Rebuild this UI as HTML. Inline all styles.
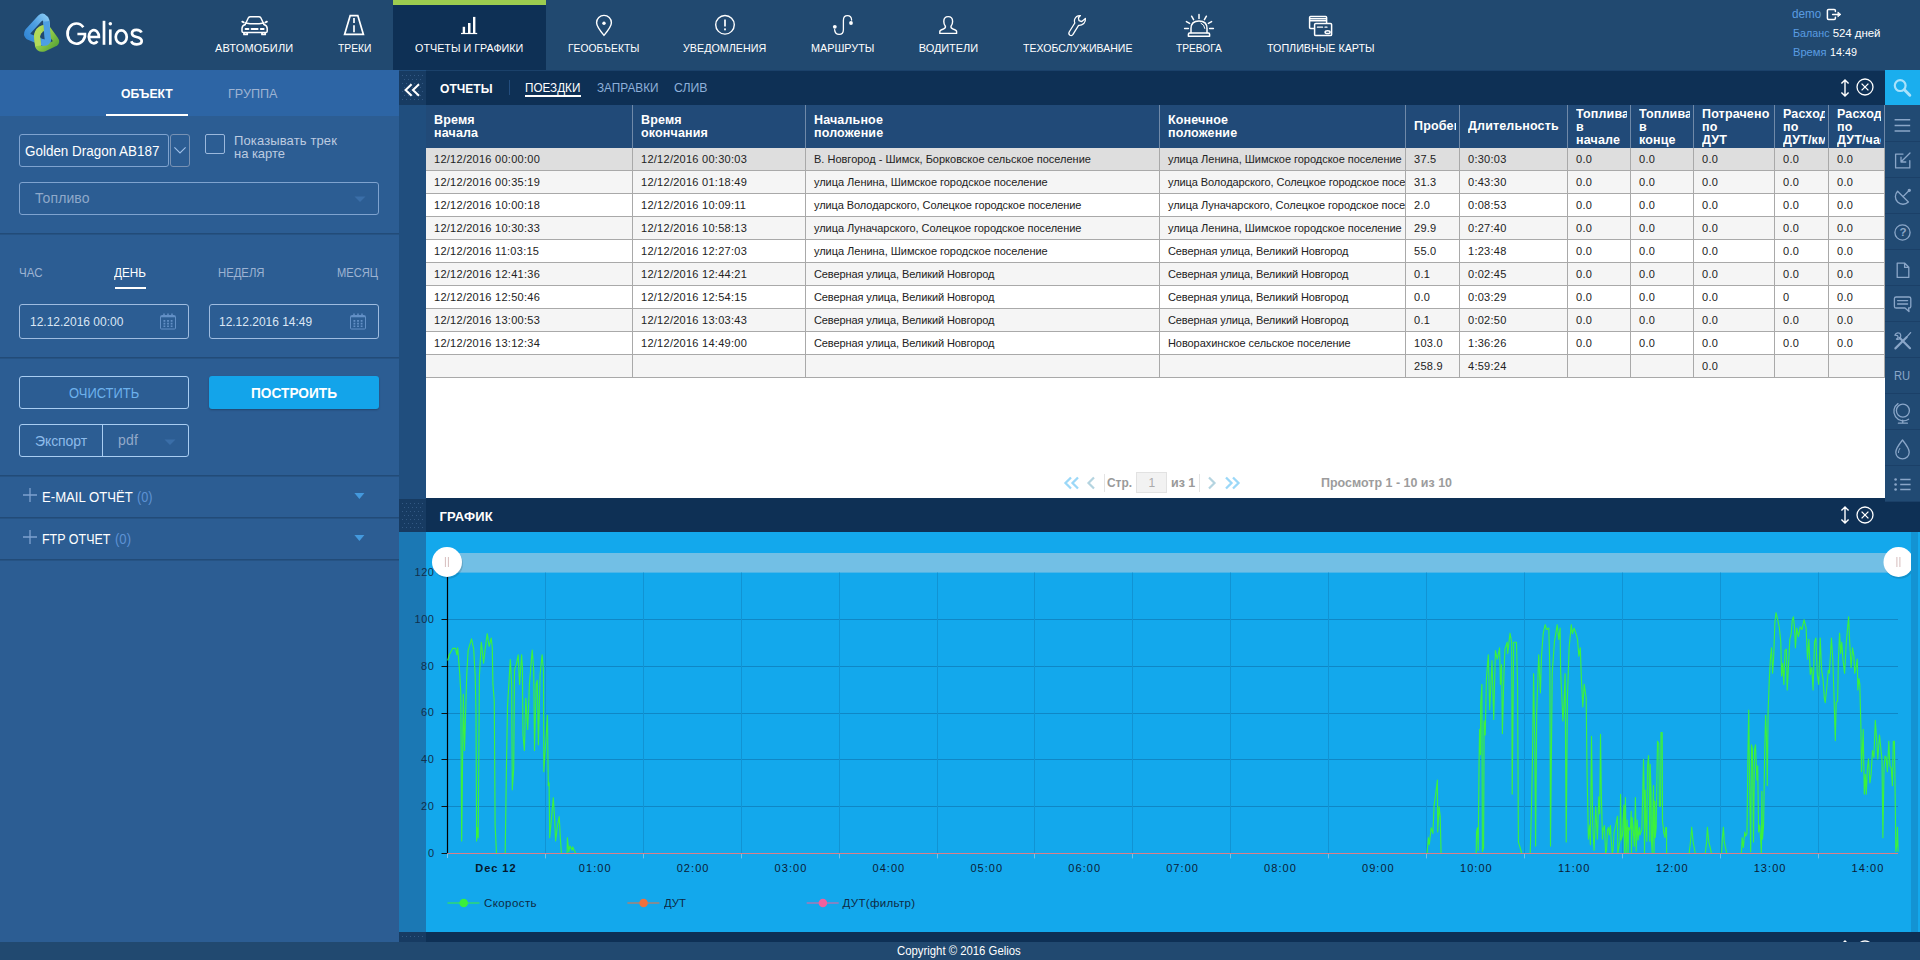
<!DOCTYPE html>
<html lang="ru"><head><meta charset="utf-8"><title>Gelios</title>
<style>
*{box-sizing:border-box;margin:0;padding:0}
html,body{width:1920px;height:960px;overflow:hidden;background:#2c5d93;font-family:"Liberation Sans",sans-serif;}
body{position:relative}
.a{position:absolute}
.t{position:absolute;white-space:nowrap;display:block}
svg{position:absolute;overflow:visible}
#hdr{position:absolute;left:0;top:0;width:1920px;height:70px;background:#214970}
#act{position:absolute;left:393px;top:0;width:153px;height:70px;background:#0e3055;border-top:5px solid #9ccc50}
#side{position:absolute;left:0;top:70px;width:399px;height:872px;background:#2c5d93}
#stabs{position:absolute;left:0;top:0;width:399px;height:46px;background:#2d65a5}
.hr{position:absolute;left:0;width:399px;height:1px;background:#224b78;box-shadow:0 1px 0 rgba(32,72,116,.45)}
.dots{background-color:#173b62;background-image:radial-gradient(circle at 1.5px 1.5px,rgba(110,150,200,.33) .5px,transparent .75px),radial-gradient(circle at 3.5px 5.5px,rgba(110,150,200,.33) .5px,transparent .75px);background-size:4px 8px;background-position:2px 3px;box-shadow:inset 0 0 0 3px #173b62}
.box{position:absolute;border:1px solid #7fa3cf;border-radius:3px}
#gut{position:absolute;left:399px;top:70px;width:27px;height:872px;background:#204e7e}
#rbar{position:absolute;left:426px;top:70px;width:1459px;height:35px;background:#0e3055}
#tbl{position:absolute;left:426px;top:105px;width:1459px;height:393px;background:#fff;overflow:hidden}
table{border-collapse:separate;border-spacing:0;table-layout:fixed;width:1459px}
th{background:#214a78;color:#fff;font-weight:bold;font-size:12.5px;line-height:13px;text-align:left;vertical-align:middle;height:43px;padding:0 3px 0 8px;text-overflow:clip;border-right:1px solid #6f89a8;overflow:hidden;white-space:nowrap}
td{height:23px;font-size:11px;color:#222;padding:0 0 0 8px;border-right:1px solid #a9a9a9;border-bottom:1px solid #a9a9a9;overflow:hidden;white-space:nowrap}
th div{overflow:hidden;white-space:nowrap;letter-spacing:.15px}
th div.h3{position:relative;top:1px}
tr.o td{background:#f5f5f5}
tr.s td{background:#dedede}
td.n{letter-spacing:.27px}
#gbar{position:absolute;left:426px;top:498px;width:1494px;height:34px;background:#0e3055}
#graph{position:absolute;left:426px;top:532px;width:1485px;height:400px;background:#13a8ec}
#tools{position:absolute;left:1885px;top:70px;width:35px;height:431px;background:#214a73}
#foot{position:absolute;left:0;top:942px;width:1920px;height:18px;background:#214970}
</style></head>
<body>
<div id="hdr">
<div id="act"></div>
<svg style="left:20px;top:10px" width="44" height="46" viewBox="20 10 44 46">
<defs>
<linearGradient id="gb" x1="0" y1="1" x2="1" y2="0"><stop offset="0" stop-color="#2e84d4"/><stop offset=".55" stop-color="#4f9fe2"/><stop offset="1" stop-color="#86c9f4"/></linearGradient>
<linearGradient id="gg" x1="0" y1="0" x2="1" y2="1"><stop offset="0" stop-color="#b4db58"/><stop offset=".45" stop-color="#93cb48"/><stop offset="1" stop-color="#55a336"/></linearGradient>
</defs>
<path d="M43.6 17.4 Q42.6 16 40.6 17.6 L28 31.4 Q26.2 34.4 28.6 36.6 L44 43 Q47.6 43.4 48 39.4 L46.4 21 Q45.6 18.4 43.6 17.4 Z" fill="none" stroke="url(#gb)" stroke-width="6.3" stroke-linejoin="round"/>
<path d="M43.4 28 Q38 29.6 37 36 L38 46 Q39.4 49.6 44 48.6 L55 43.4 Q57 41.6 55.4 39.4 L48 29.4 Q46 27.2 43.4 28 Z" fill="none" stroke="url(#gg)" stroke-width="6" stroke-linejoin="round"/>
<path d="M46.2 21.4 L47.9 39 Q47.6 42.8 44.4 42.8 L41.4 42" fill="none" stroke="#4d9fe3" stroke-width="6.1" stroke-linecap="butt" stroke-linejoin="round"/>
<path d="M38.2 45.8 L37 36 Q37.6 31.6 41 29.4" fill="none" stroke="#b2da5a" stroke-width="6" stroke-linecap="butt" stroke-linejoin="round"/>
</svg>
<svg style="left:62px;top:16px" width="86" height="34" viewBox="62 16 86 34"><g fill="none" stroke="#fff" stroke-width="2.7" stroke-linecap="butt" stroke-linejoin="miter">
<path d="M83.3 27.2 A8.9 10.1 0 1 0 84.9 36.6 L84.9 34 L77.4 34"/>
<path d="M88.6 37 L98.9 37 A5.05 6.6 0 1 0 97.5 41.3"/>
<path d="M104 20.8 V44.8"/>
<path d="M110.3 29.4 V44.8"/><circle cx="110.3" cy="23.7" r="1.75" fill="#fff" stroke="none"/>
<ellipse cx="121.25" cy="37" rx="5.5" ry="6.6"/>
<path d="M141.5 32.6 Q140.4 29.8 136.5 29.8 Q132 29.8 132 33.3 Q132 36 136.6 37 Q141.7 38.1 141.7 41.1 Q141.7 44.4 136.8 44.4 Q132.4 44.4 131.3 41.3"/>
</g></svg>
<span class="t" style="left:215.0px;top:41px;line-height:14px;font-size:11px;color:#fff;letter-spacing:0.17px;">АВТОМОБИЛИ</span>
<span class="t" style="left:337.5px;top:41px;line-height:14px;font-size:11px;color:#fff;transform:scaleX(0.9379);transform-origin:0 50%;">ТРЕКИ</span>
<span class="t" style="left:415.0px;top:41px;line-height:14px;font-size:11px;color:#fff;transform:scaleX(0.9804);transform-origin:0 50%;">ОТЧЕТЫ И ГРАФИКИ</span>
<span class="t" style="left:568.0px;top:41px;line-height:14px;font-size:11px;color:#fff;transform:scaleX(0.9358);transform-origin:0 50%;">ГЕООБЪЕКТЫ</span>
<span class="t" style="left:683.3px;top:41px;line-height:14px;font-size:11px;color:#fff;transform:scaleX(0.9767);transform-origin:0 50%;">УВЕДОМЛЕНИЯ</span>
<span class="t" style="left:811.0px;top:41px;line-height:14px;font-size:11px;color:#fff;transform:scaleX(0.9834);transform-origin:0 50%;">МАРШРУТЫ</span>
<span class="t" style="left:918.8px;top:41px;line-height:14px;font-size:11px;color:#fff;letter-spacing:-0.08px;">ВОДИТЕЛИ</span>
<span class="t" style="left:1022.5px;top:41px;line-height:14px;font-size:11px;color:#fff;transform:scaleX(0.9600);transform-origin:0 50%;">ТЕХОБСЛУЖИВАНИЕ</span>
<span class="t" style="left:1176.2px;top:41px;line-height:14px;font-size:11px;color:#fff;transform:scaleX(0.9250);transform-origin:0 50%;">ТРЕВОГА</span>
<span class="t" style="left:1266.5px;top:41px;line-height:14px;font-size:11px;color:#fff;transform:scaleX(0.9748);transform-origin:0 50%;">ТОПЛИВНЫЕ КАРТЫ</span>
<svg style="left:240px;top:15px" width="30" height="22" viewBox="240 15 30 22"><g fill="none" stroke="#fff" stroke-width="1.5" stroke-linecap="round" stroke-linejoin="round">
<path d="M245.2 24.5 L248.4 17.8 Q249 16.7 250.4 16.7 L258.8 16.7 Q260.2 16.7 260.8 17.8 L264 24.5"/>
<path d="M245.2 24.5 Q242 25.6 242 28.6 L242 31.2 Q242 32.6 243.6 32.6 L265.6 32.6 Q267.2 32.6 267.2 31.2 L267.2 28.6 Q267.2 25.6 264 24.5"/>
<path d="M245.4 22.9 Q254.6 24.6 263.8 22.9"/>
<path d="M242.3 21.7 L243.7 22.3 M266.9 21.7 L265.5 22.3" stroke-width="1.8"/>
<path d="M244 33 L244 34.4 L247.2 34.4 L247.2 33 M262 33 L262 34.4 L265.2 34.4 L265.2 33" stroke-width="1.8"/>
<path d="M245.6 28.9 L248.4 28.9 M251.6 28.9 L257.6 28.9 M260.8 28.9 L263.6 28.9" stroke-width="2"/>
</g></svg>
<svg style="left:342px;top:13px" width="24" height="24" viewBox="342 13 24 24"><g fill="none" stroke="#fff" stroke-width="1.5" stroke-linecap="round" stroke-linejoin="round">
<path d="M350.2 15.6 L357.8 15.6 L363.4 34.4 L344.6 34.4 Z" stroke-width="1.7" stroke-linejoin="miter"/>
<path d="M354 18 L354 23 M354 25.2 L354 32.2" stroke-width="1.7" stroke-linecap="butt"/>
</g></svg>
<svg style="left:460px;top:15px" width="20" height="21" viewBox="460 15 20 21"><g fill="#fff">
<rect x="461" y="32.9" width="16.2" height="1.2"/>
<rect x="462.7" y="26.8" width="2.4" height="6.5"/><rect x="468" y="23" width="2.5" height="10.3"/><rect x="473" y="16.9" width="2.4" height="16.4"/>
</g></svg>
<svg style="left:594px;top:13px" width="20" height="25" viewBox="594 13 20 25"><g fill="none" stroke="#fff" stroke-width="1.5" stroke-linecap="round" stroke-linejoin="round">
<path d="M604 35.4 Q596.6 26.6 596.6 22.8 A7.4 7.4 0 0 1 611.4 22.8 Q611.4 26.6 604 35.4 Z" stroke-width="1.4"/>
<circle cx="604" cy="23.2" r="1.7" fill="#fff" stroke="none"/>
</g></svg>
<svg style="left:713px;top:13px" width="24" height="24" viewBox="713 13 24 24"><g fill="none" stroke="#fff" stroke-width="1.5" stroke-linecap="round" stroke-linejoin="round">
<circle cx="725" cy="24.8" r="9.3" stroke-width="1.4"/>
<path d="M725 19.6 L725 26.4" stroke-width="1.7" stroke-linecap="butt"/><rect x="724.1" y="28.4" width="1.8" height="1.9" fill="#fff" stroke="none"/>
</g></svg>
<svg style="left:831px;top:13px" width="24" height="24" viewBox="831 13 24 24"><g fill="none" stroke="#fff" stroke-width="1.5" stroke-linecap="round" stroke-linejoin="round">
<path d="M834.6 29.6 Q835 34.4 839.2 34.4 Q843.4 34.4 843.4 29.4 L843.4 20.4 Q843.4 15.6 847.4 15.6 Q851.4 15.6 851.6 20" stroke-width="1.3"/>
<circle cx="834.8" cy="26.8" r="1.9" fill="#fff" stroke="none"/><circle cx="851" cy="23" r="1.9" fill="#fff" stroke="none"/>
</g></svg>
<svg style="left:937px;top:14px" width="23" height="22" viewBox="937 14 23 22"><g fill="none" stroke="#fff" stroke-width="1.5" stroke-linecap="round" stroke-linejoin="round">
<path d="M948.2 16.6 Q952.6 16.6 952.6 21.4 Q952.6 24.4 951 26.2 Q950.6 28.2 953 29 Q956.6 30 956.6 31.6 L956.6 33.4 L939.8 33.4 L939.8 31.6 Q939.8 30 943.4 29 Q945.8 28.2 945.4 26.2 Q943.8 24.4 943.8 21.4 Q943.8 16.6 948.2 16.6 Z" stroke-width="1.4"/>
</g></svg>
<svg style="left:1066px;top:13px" width="23" height="25" viewBox="1066 13 23 25"><g fill="none" stroke="#fff" stroke-width="1.5" stroke-linecap="round" stroke-linejoin="round">
<path d="M1080.4 15.6 Q1076 15.4 1074.6 19.4 Q1074 21.4 1074.8 23 L1069.2 32 Q1068.2 34 1070 35.2 Q1071.8 36.2 1073 34.4 L1078.6 25.4 Q1081.6 25.6 1083.8 23.6 Q1085.8 21.6 1085.4 18.4 L1081.8 21.6 L1079 20.6 L1078.4 17.8 Z" stroke-width="1.3"/>
</g></svg>
<svg style="left:1182px;top:12px" width="34" height="27" viewBox="1182 12 34 27"><g fill="none" stroke="#fff" stroke-width="1.5" stroke-linecap="round" stroke-linejoin="round" stroke-width="1.3">
<path d="M1191 32.8 L1191 28.6 Q1191 21 1199 21 Q1207 21 1207 28.6 L1207 32.8"/>
<path d="M1189.6 33 L1208.4 33 Q1209.6 33 1209.6 34.2 L1209.6 36.2 L1188.4 36.2 L1188.4 34.2 Q1188.4 33 1189.6 33 Z"/>
<path d="M1201 23.2 Q1204.4 24.4 1204.8 28.4" stroke-width="1"/>
<path d="M1199 14.4 L1199 18.4 M1191.6 16.2 L1193.6 19.6 M1206.4 16.2 L1204.4 19.6 M1186.4 21.6 L1189.6 23.4 M1211.6 21.6 L1208.4 23.4 M1184.6 28.6 L1188.4 28.6 M1213.4 28.6 L1209.6 28.6"/>
</g></svg>
<svg style="left:1307px;top:14px" width="27" height="24" viewBox="1307 14 27 24"><g fill="none" stroke="#fff" stroke-width="1.5" stroke-linecap="round" stroke-linejoin="round" stroke-width="1.1">
<path d="M1314.4 28.6 L1310.6 28.6 Q1309.6 28.6 1309.6 27.6 L1309.6 17.4 Q1309.6 16.4 1310.6 16.4 L1325.6 16.4 Q1326.6 16.4 1326.6 17.4 L1326.6 23"/>
<path d="M1309.8 18.8 L1326.4 18.8 M1309.8 20.8 L1326.4 20.8"/>
<rect x="1314.6" y="23.4" width="17" height="12.2" rx="1.2"/>
<path d="M1317.4 27.2 L1322.6 27.2 M1325 27.2 L1327 27.2" stroke-width="1.2"/>
<ellipse cx="1327.6" cy="32.2" rx="2.5" ry="1.4"/>
</g></svg>
<span class="t" style="left:1792.3px;top:6px;line-height:16px;font-size:12px;color:#5a9de2;transform:scaleX(0.9728);transform-origin:0 50%;">demo</span>
<svg style="left:1825px;top:7px" width="18" height="15" viewBox="1825 7 18 15"><g fill="none" stroke="#fff" stroke-width="1.5" stroke-linecap="round" stroke-linejoin="round" stroke-width="1.3">
<path d="M1835.4 11.6 L1835.4 10.6 Q1835.4 9.4 1834.2 9.4 L1828.6 9.4 Q1827.4 9.4 1827.4 10.6 L1827.4 18.2 Q1827.4 19.4 1828.6 19.4 L1834.2 19.4 Q1835.4 19.4 1835.4 18.2 L1835.4 17.2"/>
<path d="M1832.6 14.4 L1840 14.4"/><path d="M1838.2 12.2 L1840.8 14.4 L1838.2 16.6 Z" fill="#fff" stroke-width=".8"/>
</g></svg>
<span class="t" style="left:1792.5px;top:26px;line-height:15px;font-size:11.5px;color:#5a9de2;transform:scaleX(0.9329);transform-origin:0 50%;">Баланс</span><span class="t" style="left:1832.7px;top:26px;line-height:15px;font-size:11.5px;color:#fff;letter-spacing:-0.06px;">524 дней</span>
<span class="t" style="left:1792.5px;top:45px;line-height:15px;font-size:11.5px;color:#5a9de2;transform:scaleX(0.9684);transform-origin:0 50%;">Время</span><span class="t" style="left:1830.0px;top:45px;line-height:15px;font-size:11.5px;color:#fff;transform:scaleX(0.9391);transform-origin:0 50%;">14:49</span>
</div>
<div id="side">
<div id="stabs"><div class="a" style="left:106px;top:43.6px;width:82px;height:2.4px;background:#fff"></div></div>
<span class="t" style="left:121.2px;top:15px;line-height:17px;font-size:13px;color:#fff;transform:scaleX(0.9394);transform-origin:0 50%;font-weight:bold;">ОБЪЕКТ</span><span class="t" style="left:227.5px;top:15px;line-height:17px;font-size:13px;color:#9db3d2;transform:scaleX(0.9694);transform-origin:0 50%;">ГРУППА</span>
<div class="box" style="left:19px;top:64px;width:150px;height:33px"></div><div class="box" style="left:169.5px;top:64px;width:20.5px;height:33px;border-color:#7892b4"></div><svg style="left:172px;top:72px" width="16" height="16" viewBox="0 0 16 16"><path d="M2.4 5.4 L8 11 L13.6 5.4" fill="none" stroke="#9fc0e8" stroke-width="1.1"/></svg>
<span class="t" style="left:25.0px;top:72px;line-height:18px;font-size:14px;color:#fff;transform:scaleX(0.9596);transform-origin:0 50%;">Golden Dragon AB187</span>
<div class="box" style="left:205px;top:64px;width:20px;height:20px;border-color:#9bb8dc;border-radius:2px"></div><span class="t" style="left:234.0px;top:62px;line-height:17px;font-size:13px;color:#bccbe0;letter-spacing:0.13px;">Показывать трек</span><span class="t" style="left:234.0px;top:75px;line-height:17px;font-size:13px;color:#bccbe0;letter-spacing:-0.03px;">на карте</span>
<div class="box" style="left:19px;top:112px;width:360px;height:33px"></div><span class="t" style="left:35.0px;top:119px;line-height:18px;font-size:14px;color:#8fa9ca;letter-spacing:0.10px;">Топливо</span>
<svg style="left:354px;top:126px" width="12" height="7" viewBox="0 0 12 7"><path d="M0.5 0.5 L11.5 0.5 L6 6 Z" fill="#3a6ea8"/></svg>
<div class="hr" style="top:163px"></div>
<span class="t" style="left:19.0px;top:194px;line-height:17px;font-size:13px;color:#9db3d2;transform:scaleX(0.8884);transform-origin:0 50%;">ЧАС</span><span class="t" style="left:114.0px;top:194px;line-height:17px;font-size:13px;color:#fff;transform:scaleX(0.9042);transform-origin:0 50%;">ДЕНЬ</span><span class="t" style="left:218.0px;top:194px;line-height:17px;font-size:13px;color:#9db3d2;transform:scaleX(0.8699);transform-origin:0 50%;">НЕДЕЛЯ</span><span class="t" style="left:337.0px;top:194px;line-height:17px;font-size:13px;color:#9db3d2;transform:scaleX(0.8561);transform-origin:0 50%;">МЕСЯЦ</span>
<div class="a" style="left:115px;top:217px;width:31px;height:2px;background:#fff"></div>
<div class="box" style="left:19px;top:234px;width:170px;height:35px;border-color:#9fbce0"></div><span class="t" style="left:29.6px;top:243px;line-height:17px;font-size:13px;color:#dbe6f4;transform:scaleX(0.9225);transform-origin:0 50%;">12.12.2016 00:00</span><svg style="left:159px;top:242px" width="18" height="18" viewBox="0 0 18 18"><g fill="none" stroke="#6390c6" stroke-width="1">
<rect x="1.5" y="3.5" width="15" height="13.5" rx="1"/><path d="M5 1.6 V5 M9 1.6 V5 M13 1.6 V5" stroke-width="1.5"/><path d="M2 4.6 H16" stroke-width="1.4"/>
<path d="M5.4 8 V15 M9 8 V15 M12.6 8 V15" stroke-width="1.8" stroke-dasharray="1.7 1.1"/></g></svg>
<div class="box" style="left:209px;top:234px;width:170px;height:35px;border-color:#9fbce0"></div><span class="t" style="left:219.4px;top:243px;line-height:17px;font-size:13px;color:#dbe6f4;transform:scaleX(0.9195);transform-origin:0 50%;">12.12.2016 14:49</span><svg style="left:349px;top:242px" width="18" height="18" viewBox="0 0 18 18"><g fill="none" stroke="#6390c6" stroke-width="1">
<rect x="1.5" y="3.5" width="15" height="13.5" rx="1"/><path d="M5 1.6 V5 M9 1.6 V5 M13 1.6 V5" stroke-width="1.5"/><path d="M2 4.6 H16" stroke-width="1.4"/>
<path d="M5.4 8 V15 M9 8 V15 M12.6 8 V15" stroke-width="1.8" stroke-dasharray="1.7 1.1"/></g></svg>
<div class="hr" style="top:287px"></div>
<div class="box" style="left:19px;top:306px;width:170px;height:33px;border-color:#a9cdf2"></div><span class="t" style="left:68.8px;top:314px;line-height:18px;font-size:14px;color:#6db1ec;transform:scaleX(0.9243);transform-origin:0 50%;">ОЧИСТИТЬ</span>
<div class="a" style="left:209px;top:306px;width:170px;height:33px;background:#13a4ea;border-radius:3px;box-shadow:0 1px 2px rgba(0,0,0,.25)"></div><span class="t" style="left:251.0px;top:314px;line-height:18px;font-size:14px;color:#fff;transform:scaleX(0.9774);transform-origin:0 50%;font-weight:bold;">ПОСТРОИТЬ</span>
<div class="box" style="left:19px;top:354px;width:170px;height:33px;border-color:#a9cdf2"></div><div class="a" style="left:102px;top:355px;width:1px;height:31px;background:#a9cdf2"></div><span class="t" style="left:35.0px;top:362px;line-height:18px;font-size:14px;color:#8dbbea;letter-spacing:-0.08px;">Экспорт</span><span class="t" style="left:118.0px;top:361px;line-height:18px;font-size:14px;color:#93a9c9;letter-spacing:0.18px;">pdf</span>
<svg style="left:164px;top:369px" width="12" height="7" viewBox="0 0 12 7"><path d="M0.5 0.5 L11.5 0.5 L6 6 Z" fill="#3a6ea8"/></svg>
<div class="hr" style="top:405px"></div>
<svg style="left:22px;top:417px" width="16" height="16" viewBox="0 0 16 16"><path d="M8 1 V15 M1 8 H15" stroke="#7ea1cf" stroke-width="1.3"/></svg><span class="t" style="left:41.6px;top:418px;line-height:18px;font-size:14px;color:#fff;transform:scaleX(0.9379);transform-origin:0 50%;">E-MAIL ОТЧЁТ</span><span class="t" style="left:136.5px;top:418px;line-height:18px;font-size:14px;color:#5e92d4;transform:scaleX(0.9068);transform-origin:0 50%;">(0)</span><svg style="left:354px;top:423px" width="11" height="7" viewBox="0 0 11 7"><path d="M0.4 0 L10.4 0 L5.4 6 Z" fill="#4499dd"/></svg>
<svg style="left:22px;top:459px" width="16" height="16" viewBox="0 0 16 16"><path d="M8 1 V15 M1 8 H15" stroke="#7ea1cf" stroke-width="1.3"/></svg><span class="t" style="left:41.6px;top:460px;line-height:18px;font-size:14px;color:#fff;transform:scaleX(0.8914);transform-origin:0 50%;">FTP ОТЧЕТ</span><span class="t" style="left:115.0px;top:460px;line-height:18px;font-size:14px;color:#5e92d4;transform:scaleX(0.9360);transform-origin:0 50%;">(0)</span><svg style="left:354px;top:465px" width="11" height="7" viewBox="0 0 11 7"><path d="M0.4 0 L10.4 0 L5.4 6 Z" fill="#4499dd"/></svg>
<div class="hr" style="top:447px"></div><div class="hr" style="top:489px"></div>
</div>
<div id="gut"><div class="a dots" style="left:0;top:1px;width:27px;height:34px"></div><svg style="left:5px;top:13px" width="17" height="14" viewBox="0 0 17 14"><path d="M7.6 1.2 L1.6 7 L7.6 12.8 M15 1.2 L9 7 L15 12.8" fill="none" stroke="#fff" stroke-width="2.1"/></svg><div class="a dots" style="left:0;top:429px;width:27px;height:33px"></div><div class="a" style="left:0;top:462px;width:27px;height:400px;background:#1b78b4"></div><div class="a dots" style="left:0;top:862px;width:27px;height:10px"></div></div>
<div id="rbar"><div class="a" style="left:0;top:0;width:1459px;height:1px;background:#1b416a"></div></div>
<span class="t" style="left:439.5px;top:80px;line-height:17px;font-size:13px;color:#fff;transform:scaleX(0.9287);transform-origin:0 50%;font-weight:bold;">ОТЧЕТЫ</span><div class="a" style="left:508.5px;top:80px;width:1.6px;height:15px;background:#234d7e"></div><span class="t" style="left:525.2px;top:79px;line-height:17px;font-size:13px;color:#fff;transform:scaleX(0.9003);transform-origin:0 50%;">ПОЕЗДКИ</span><div class="a" style="left:525px;top:95px;width:56px;height:2px;background:#fff"></div><span class="t" style="left:596.5px;top:79px;line-height:17px;font-size:13px;color:#8fb1da;transform:scaleX(0.9071);transform-origin:0 50%;">ЗАПРАВКИ</span><span class="t" style="left:674.0px;top:79px;line-height:17px;font-size:13px;color:#8fb1da;transform:scaleX(0.9437);transform-origin:0 50%;">СЛИВ</span>
<svg style="left:1839px;top:78px" width="12" height="20" viewBox="0 0 12 20"><path d="M6 2 V18 M2.4 5.6 L6 2 L9.6 5.6 M2.4 14.4 L6 18 L9.6 14.4" fill="none" stroke="#fff" stroke-width="1.4"/></svg><svg style="left:1855px;top:77px" width="20" height="20" viewBox="0 0 20 20"><g fill="none" stroke="#fff" stroke-width="1.3"><circle cx="10" cy="10" r="8"/><path d="M6.6 6.6 L13.4 13.4 M13.4 6.6 L6.6 13.4"/></g></svg>
<div id="tbl"><table><colgroup><col style="width:207px"><col style="width:173px"><col style="width:354px"><col style="width:246px"><col style="width:54px"><col style="width:108px"><col style="width:63px"><col style="width:63px"><col style="width:81px"><col style="width:54px"><col style="width:56px"></colgroup>
<thead><tr><th><div>Время<br>начала</div></th><th><div>Время<br>окончания</div></th><th><div>Начальное<br>положение</div></th><th><div>Конечное<br>положение</div></th><th><div>Пробег</div></th><th><div>Длительность</div></th><th><div class="h3">Топлива<br>в<br>начале</div></th><th><div class="h3">Топлива<br>в<br>конце</div></th><th><div class="h3">Потрачено<br>по<br>ДУТ</div></th><th><div class="h3">Расход<br>по<br>ДУТ/км</div></th><th><div class="h3">Расход<br>по<br>ДУТ/час</div></th></tr></thead>
<tbody>
<tr class="s"><td class="n">12/12/2016 00:00:00</td><td class="n">12/12/2016 00:30:03</td><td>В. Новгород - Шимск, Борковское сельское поселение</td><td style="letter-spacing:-0.03px">улица Ленина, Шимское городское поселение</td><td class="n">37.5</td><td class="n">0:30:03</td><td class="n">0.0</td><td class="n">0.0</td><td class="n">0.0</td><td class="n">0.0</td><td class="n">0.0</td></tr>
<tr class="o"><td class="n">12/12/2016 00:35:19</td><td class="n">12/12/2016 01:18:49</td><td style="letter-spacing:-0.03px">улица Ленина, Шимское городское поселение</td><td style="letter-spacing:-0.08px">улица Володарского, Солецкое городское поселение</td><td class="n">31.3</td><td class="n">0:43:30</td><td class="n">0.0</td><td class="n">0.0</td><td class="n">0.0</td><td class="n">0.0</td><td class="n">0.0</td></tr>
<tr class=""><td class="n">12/12/2016 10:00:18</td><td class="n">12/12/2016 10:09:11</td><td style="letter-spacing:-0.08px">улица Володарского, Солецкое городское поселение</td><td style="letter-spacing:-0.05px">улица Луначарского, Солецкое городское поселение</td><td class="n">2.0</td><td class="n">0:08:53</td><td class="n">0.0</td><td class="n">0.0</td><td class="n">0.0</td><td class="n">0.0</td><td class="n">0.0</td></tr>
<tr class="o"><td class="n">12/12/2016 10:30:33</td><td class="n">12/12/2016 10:58:13</td><td style="letter-spacing:-0.05px">улица Луначарского, Солецкое городское поселение</td><td style="letter-spacing:-0.03px">улица Ленина, Шимское городское поселение</td><td class="n">29.9</td><td class="n">0:27:40</td><td class="n">0.0</td><td class="n">0.0</td><td class="n">0.0</td><td class="n">0.0</td><td class="n">0.0</td></tr>
<tr class=""><td class="n">12/12/2016 11:03:15</td><td class="n">12/12/2016 12:27:03</td><td style="letter-spacing:-0.03px">улица Ленина, Шимское городское поселение</td><td style="letter-spacing:-0.1px">Северная улица, Великий Новгород</td><td class="n">55.0</td><td class="n">1:23:48</td><td class="n">0.0</td><td class="n">0.0</td><td class="n">0.0</td><td class="n">0.0</td><td class="n">0.0</td></tr>
<tr class="o"><td class="n">12/12/2016 12:41:36</td><td class="n">12/12/2016 12:44:21</td><td style="letter-spacing:-0.1px">Северная улица, Великий Новгород</td><td style="letter-spacing:-0.1px">Северная улица, Великий Новгород</td><td class="n">0.1</td><td class="n">0:02:45</td><td class="n">0.0</td><td class="n">0.0</td><td class="n">0.0</td><td class="n">0.0</td><td class="n">0.0</td></tr>
<tr class=""><td class="n">12/12/2016 12:50:46</td><td class="n">12/12/2016 12:54:15</td><td style="letter-spacing:-0.1px">Северная улица, Великий Новгород</td><td style="letter-spacing:-0.1px">Северная улица, Великий Новгород</td><td class="n">0.0</td><td class="n">0:03:29</td><td class="n">0.0</td><td class="n">0.0</td><td class="n">0.0</td><td class="n">0</td><td class="n">0.0</td></tr>
<tr class="o"><td class="n">12/12/2016 13:00:53</td><td class="n">12/12/2016 13:03:43</td><td style="letter-spacing:-0.1px">Северная улица, Великий Новгород</td><td style="letter-spacing:-0.1px">Северная улица, Великий Новгород</td><td class="n">0.1</td><td class="n">0:02:50</td><td class="n">0.0</td><td class="n">0.0</td><td class="n">0.0</td><td class="n">0.0</td><td class="n">0.0</td></tr>
<tr class=""><td class="n">12/12/2016 13:12:34</td><td class="n">12/12/2016 14:49:00</td><td style="letter-spacing:-0.1px">Северная улица, Великий Новгород</td><td style="letter-spacing:-0.07px">Новорахинское сельское поселение</td><td class="n">103.0</td><td class="n">1:36:26</td><td class="n">0.0</td><td class="n">0.0</td><td class="n">0.0</td><td class="n">0.0</td><td class="n">0.0</td></tr>
<tr class="o"><td class="n"></td><td class="n"></td><td></td><td></td><td class="n">258.9</td><td class="n">4:59:24</td><td class="n"></td><td class="n"></td><td class="n">0.0</td><td class="n"></td><td class="n"></td></tr>
</tbody></table>
<svg style="left:638px;top:371px" width="16" height="14" viewBox="0 0 16 14"><path d="M7 1.5 L1.5 7 L7 12.5 M14 1.5 L8.5 7 L14 12.5" fill="none" stroke="#9bd8f8" stroke-width="2.3"/></svg><svg style="left:660px;top:371px" width="16" height="14" viewBox="0 0 16 14"><path d="M8 1.5 L2.5 7 L8 12.5" fill="none" stroke="#b4d4e0" stroke-width="2.2"/></svg><svg style="left:779px;top:371px" width="16" height="14" viewBox="0 0 16 14"><path d="M4 1.5 L9.5 7 L4 12.5" fill="none" stroke="#b4d4e0" stroke-width="2.2"/></svg><svg style="left:798px;top:371px" width="16" height="14" viewBox="0 0 16 14"><path d="M2 1.5 L7.5 7 L2 12.5 M9 1.5 L14.5 7 L9 12.5" fill="none" stroke="#9bd8f8" stroke-width="2.3"/></svg><div class="a" style="left:678px;top:369px;width:1px;height:18px;background:#e4e4e4"></div><div class="a" style="left:773px;top:369px;width:1px;height:18px;background:#e4e4e4"></div><span class="t" style="left:681.0px;top:369px;line-height:17px;font-size:13px;color:#999;transform:scaleX(0.9159);transform-origin:0 50%;font-weight:bold;">Стр.</span><div class="a" style="left:710px;top:367px;width:31px;height:21px;background:#f2f2f2;border:1px solid #e2e2e2"></div><span class="t" style="left:722.5px;top:370px;line-height:16px;font-size:12px;color:#aaa;">1</span><span class="t" style="left:744.7px;top:369px;line-height:17px;font-size:13px;color:#999;transform:scaleX(0.9606);transform-origin:0 50%;font-weight:bold;">из 1</span><span class="t" style="left:895.0px;top:369px;line-height:17px;font-size:13px;color:#9c9c9c;transform:scaleX(0.9588);transform-origin:0 50%;font-weight:bold;">Просмотр 1 - 10 из 10</span>
</div>
<div id="gbar"></div><span class="t" style="left:439.5px;top:508px;line-height:17px;font-size:13px;color:#fff;letter-spacing:0.19px;font-weight:bold;">ГРАФИК</span><svg style="left:1839px;top:505px" width="12" height="20" viewBox="0 0 12 20"><path d="M6 2 V18 M2.4 5.6 L6 2 L9.6 5.6 M2.4 14.4 L6 18 L9.6 14.4" fill="none" stroke="#fff" stroke-width="1.4"/></svg><svg style="left:1855px;top:505px" width="20" height="20" viewBox="0 0 20 20"><g fill="none" stroke="#fff" stroke-width="1.3"><circle cx="10" cy="10" r="8"/><path d="M6.6 6.6 L13.4 13.4 M13.4 6.6 L6.6 13.4"/></g></svg>
<div id="graph"><svg style="left:0;top:0" width="1485" height="400" viewBox="426 532 1485 400"><rect x="447" y="553" width="1451" height="19.6" fill="#72bfe5"/><path d="M447.5 806.5 H1898 M447.5 759.5 H1898 M447.5 713.5 H1898 M447.5 666.5 H1898 M447.5 619.5 H1898 " stroke="#0f87c6" stroke-width="1" fill="none"/><path d="M545.5 572.6 V853 M643.5 572.6 V853 M741.5 572.6 V853 M839.5 572.6 V853 M937.5 572.6 V853 M1034.5 572.6 V853 M1132.5 572.6 V853 M1230.5 572.6 V853 M1328.5 572.6 V853 M1426.5 572.6 V853 M1524.5 572.6 V853 M1622.5 572.6 V853 M1720.5 572.6 V853 M1818.5 572.6 V853 " stroke="#1193d3" stroke-width="1" fill="none"/><path d="M545.5 854 V858.4 M643.5 854 V858.4 M741.5 854 V858.4 M839.5 854 V858.4 M937.5 854 V858.4 M1034.5 854 V858.4 M1132.5 854 V858.4 M1230.5 854 V858.4 M1328.5 854 V858.4 M1426.5 854 V858.4 M1524.5 854 V858.4 M1622.5 854 V858.4 M1720.5 854 V858.4 M1818.5 854 V858.4 " stroke="#6fc4ee" stroke-width="1" fill="none"/><path d="M441.5 853.5 H447.5 M441.5 806.5 H447.5 M441.5 759.5 H447.5 M441.5 713.5 H447.5 M441.5 666.5 H447.5 M441.5 619.5 H447.5 " stroke="#111" stroke-width="1" fill="none"/><path d="M447.5 572 V853.5" stroke="#000" stroke-width="1.2" fill="none"/><polyline points="447.6,660.5 449.3,654.8 452.7,648.4 455.5,648.4 456.9,654.8 457.7,647.8 458.6,659.1 459.7,673.1 460.8,692.8 461.7,841.0 463.3,694.2 464.5,750.5 466.7,675.9 468.1,650.6 471.5,638.8 473.7,649.2 475.2,675.9 476.0,712.5 476.6,841.0 477.4,827.8 478.2,837.7 479.4,675.9 481.3,642.2 483.6,663.3 485.0,650.6 487.2,633.7 489.2,646.4 491.2,638.0 492.3,647.8 492.9,684.4 494.3,701.2 495.1,825.0 496.5,853.5 505.2,853.5 506.4,768.7 507.5,706.9 510.3,659.6 511.7,684.4 512.3,789.8 513.7,768.7 514.5,670.3 516.5,663.3 518.2,654.8 519.6,684.4 521.6,654.8 522.4,667.5 523.0,735.0 524.4,750.5 525.8,698.4 527.7,729.4 529.4,684.4 532.2,650.1 533.7,670.3 534.5,750.5 536.2,684.4 537.3,680.2 538.4,744.8 540.1,674.5 542.1,654.8 543.5,670.3 543.8,771.6 545.5,746.2 547.4,715.3 548.3,785.6 549.1,782.8 549.7,837.7 551.4,819.4 553.3,797.7 554.7,819.4 555.6,841.0 557.6,825.0 559.2,816.6 560.4,839.1 561.5,853.5 567.1,853.5 567.4,837.7 568.8,851.7 569.9,846.1 572.2,850.3 572.7,846.9 575.8,853.5 1427.0,853.5 1428.4,837.7 1429.3,844.7 1431.2,827.8 1432.9,833.4 1434.1,805.3 1435.7,794.1 1437.4,780.0 1437.7,832.0 1439.1,806.7 1440.2,816.6 1441.1,853.5 1476.2,853.5 1476.5,832.0 1477.4,827.8 1478.2,850.3 1479.1,760.3 1479.6,729.4 1480.5,754.7 1480.7,704.1 1481.9,684.4 1482.4,851.7 1483.6,847.5 1484.1,720.9 1485.2,735.0 1486.4,678.7 1488.3,654.8 1489.7,709.7 1492.0,660.5 1493.7,719.5 1495.4,650.6 1497.3,659.1 1499.6,647.8 1500.4,684.4 1501.6,664.7 1502.4,733.6 1503.8,678.7 1504.9,649.2 1507.2,642.2 1507.7,653.4 1510.0,633.2 1511.7,642.2 1512.2,794.1 1513.7,642.2 1516.5,642.2 1517.6,684.4 1518.4,841.9 1520.1,847.5 1521.8,853.5 1530.2,853.5 1531.4,810.9 1532.5,757.5 1533.6,673.7 1534.7,740.6 1535.6,846.1 1536.7,712.5 1538.7,654.8 1540.4,692.8 1541.5,656.2 1543.2,633.7 1545.2,624.7 1546.6,629.5 1548.8,628.1 1549.9,670.3 1550.5,846.1 1552.2,673.1 1554.4,642.2 1557.2,624.7 1558.7,639.4 1560.1,628.1 1560.6,670.3 1562.9,720.9 1564.0,704.1 1565.1,673.7 1566.2,841.9 1567.4,698.4 1569.1,647.8 1571.3,624.7 1572.4,633.7 1574.1,628.1 1576.1,633.7 1577.5,639.4 1578.9,656.2 1580.3,647.8 1580.3,647.8 1581.4,678.7 1582.8,706.9 1584.2,684.4 1586.2,698.4 1587.0,768.7 1588.4,839.1 1589.8,825.0 1590.4,844.7 1591.5,736.4 1592.7,825.0 1594.1,850.3 1595.7,806.7 1597.4,839.1 1598.8,796.9 1599.7,813.7 1600.5,734.4 1601.4,796.9 1602.5,839.1 1602.5,837.5 1603.1,830.0 1604.4,825.6 1605.6,853.5 1606.5,850.0 1607.5,830.0 1608.5,827.5 1609.4,835.0 1610.4,825.6 1611.2,840.0 1612.2,853.5 1613.1,850.0 1614.0,832.5 1615.6,826.2 1617.5,816.2 1617.8,853.5 1618.8,847.5 1620.0,841.2 1620.6,794.4 1621.2,840.0 1622.5,835.0 1623.1,820.0 1624.0,805.0 1624.5,853.5 1625.4,797.5 1626.2,853.5 1627.2,820.0 1628.1,853.5 1628.5,827.5 1629.5,830.0 1630.6,826.2 1631.2,811.2 1631.5,853.5 1632.2,817.5 1633.1,827.5 1634.4,846.2 1635.4,797.5 1636.2,851.2 1637.2,820.0 1638.1,840.0 1639.4,827.5 1640.0,835.0 1641.9,828.8 1642.5,802.5 1643.5,759.4 1644.0,781.2 1644.5,853.5 1645.2,790.0 1646.2,827.5 1646.9,841.2 1647.5,766.2 1648.5,755.6 1649.1,777.5 1649.8,841.2 1650.2,764.4 1651.0,790.0 1651.5,841.2 1652.2,853.5 1653.1,800.0 1653.5,785.6 1654.0,853.5 1654.8,801.2 1655.2,837.5 1656.2,827.5 1656.9,777.5 1657.5,741.2 1658.8,743.8 1659.4,806.2 1660.6,806.2 1661.0,732.5 1662.2,732.5 1662.5,821.2 1663.8,832.5 1665.0,837.5 1665.6,827.5 1666.5,827.5 1666.6,853.5 1666.6,853.5 1689.1,853.5 1690.2,844.7 1691.7,827.2 1693.1,841.9 1695.3,853.5 1705.2,853.5 1706.6,841.9 1707.4,827.2 1708.8,841.9 1711.6,853.5 1721.5,853.5 1722.3,839.1 1723.4,827.2 1724.3,841.9 1726.8,853.5 1738.9,853.5 1741.4,853.5 1742.2,837.7 1743.4,847.5 1744.8,832.0 1745.6,836.2 1747.0,833.4 1747.9,757.5 1748.7,710.2 1749.8,796.9 1750.7,851.7 1751.5,744.8 1752.4,749.1 1753.5,841.9 1754.6,749.1 1755.5,744.8 1756.9,780.0 1757.7,765.9 1758.6,832.0 1759.7,825.0 1760.8,841.9 1761.4,853.5 1761.9,791.2 1762.5,839.1 1763.6,825.0 1764.7,751.9 1765.6,715.3 1766.4,735.0 1767.3,785.6 1768.1,712.5 1769.2,681.6 1770.4,659.1 1771.5,647.8 1772.6,673.1 1773.7,656.2 1774.9,622.5 1776.0,612.7 1777.7,619.7 1779.4,628.1 1780.8,642.2 1781.6,675.9 1782.7,663.3 1783.9,684.4 1785.0,650.6 1786.4,649.2 1787.2,690.0 1788.4,667.5 1789.8,639.4 1791.2,633.7 1792.3,619.7 1793.4,616.9 1794.6,628.1 1795.4,647.8 1796.8,628.1 1798.5,636.6 1800.2,626.7 1801.9,629.5 1804.1,619.7 1806.1,628.1 1807.5,659.1 1808.9,639.4 1810.3,674.5 1811.7,667.5 1813.1,690.0 1814.5,642.2 1815.9,638.0 1817.3,674.5 1818.7,684.4 1820.2,638.0 1821.6,670.3 1823.0,678.7 1824.4,698.4 1825.2,702.7 1826.6,690.0 1828.3,670.3 1829.4,673.1 1831.4,638.0 1832.8,659.1 1834.2,702.7 1835.3,740.6 1836.2,702.7 1837.6,701.2 1838.4,659.1 1839.6,633.2 1840.7,653.4 1841.8,642.2 1842.9,659.1 1844.6,673.1 1846.3,642.2 1848.6,616.9 1849.7,642.2 1851.1,667.5 1852.5,647.8 1853.9,656.2 1854.7,673.1 1856.2,666.1 1857.3,659.1 1857.8,690.0 1859.0,678.7 1859.8,684.4 1860.9,726.6 1861.5,771.6 1863.2,729.4 1864.3,794.1 1865.4,774.4 1866.3,794.1 1867.4,768.7 1868.5,758.9 1869.9,782.8 1871.1,774.4 1872.5,750.5 1873.9,757.5 1875.3,720.4 1876.7,740.6 1877.8,758.9 1879.5,735.0 1881.2,751.9 1882.0,760.3 1882.9,837.7 1884.0,768.7 1885.1,756.1 1886.2,757.5 1887.4,771.6 1888.8,741.2 1889.9,765.9 1891.3,768.7 1892.4,785.6 1893.3,741.2 1894.4,741.2 1895.2,796.9 1895.8,851.7 1896.9,844.7 1897.5,827.2 1898.1,851.7" fill="none" stroke="#3cf23c" stroke-width="1.15" stroke-linejoin="round"/><path d="M447.5 853.5 H1898" stroke="#d9808a" stroke-width="1" fill="none"/><path d="M447.5 853.5 V858" stroke="#7fc6ea" stroke-width="1" fill="none"/><circle cx="447" cy="562.6" r="15" fill="#000" opacity=".12" transform="translate(1 1.2)"/><circle cx="447" cy="562" r="15" fill="#fff"/><path d="M445.4 557 V567 M448.4 557 V567" stroke="#d6bdbd" stroke-width="1"/><circle cx="1898.5" cy="562.6" r="15" fill="#000" opacity=".12" transform="translate(1 1.2)"/><circle cx="1898.5" cy="562" r="15" fill="#fff"/><path d="M1896.9 557 V567 M1899.9 557 V567" stroke="#d6bdbd" stroke-width="1"/><path d="M447.5 903 H479.5" stroke="#3af03a" stroke-width="1"/><circle cx="463.7" cy="903" r="4.3" fill="#3af03a"/><path d="M627.4 903 H659.4" stroke="#f0703c" stroke-width="1"/><circle cx="643.6" cy="903" r="4.3" fill="#f0703c"/><path d="M806.7 903 H838.7" stroke="#f0609c" stroke-width="1"/><circle cx="822.9000000000001" cy="903" r="4.3" fill="#f0609c"/></svg>
<span class="t" style="left:1.9px;top:314px;line-height:14px;font-size:11px;color:#12304c;letter-spacing:0.48px;">0</span><span class="t" style="left:-4.9px;top:267px;line-height:14px;font-size:11px;color:#12304c;letter-spacing:0.57px;">20</span><span class="t" style="left:-4.9px;top:220px;line-height:14px;font-size:11px;color:#12304c;letter-spacing:0.57px;">40</span><span class="t" style="left:-4.9px;top:173px;line-height:14px;font-size:11px;color:#12304c;letter-spacing:0.57px;">60</span><span class="t" style="left:-4.9px;top:127px;line-height:14px;font-size:11px;color:#12304c;letter-spacing:0.57px;">80</span><span class="t" style="left:-11.5px;top:80px;line-height:14px;font-size:11px;color:#12304c;letter-spacing:0.54px;">100</span><span class="t" style="left:-11.5px;top:33px;line-height:14px;font-size:11px;color:#12304c;letter-spacing:0.54px;">120</span>
<span class="t" style="left:49.3px;top:329px;line-height:14px;font-size:11px;color:#06182c;letter-spacing:0.95px;font-weight:bold;">Dec 12</span><span class="t" style="left:152.8px;top:329px;line-height:14px;font-size:11px;color:#0b2036;letter-spacing:1.05px;">01:00</span><span class="t" style="left:250.7px;top:329px;line-height:14px;font-size:11px;color:#0b2036;letter-spacing:1.05px;">02:00</span><span class="t" style="left:348.6px;top:329px;line-height:14px;font-size:11px;color:#0b2036;letter-spacing:1.05px;">03:00</span><span class="t" style="left:446.5px;top:329px;line-height:14px;font-size:11px;color:#0b2036;letter-spacing:1.05px;">04:00</span><span class="t" style="left:544.4px;top:329px;line-height:14px;font-size:11px;color:#0b2036;letter-spacing:1.05px;">05:00</span><span class="t" style="left:642.3px;top:329px;line-height:14px;font-size:11px;color:#0b2036;letter-spacing:1.05px;">06:00</span><span class="t" style="left:740.2px;top:329px;line-height:14px;font-size:11px;color:#0b2036;letter-spacing:1.05px;">07:00</span><span class="t" style="left:838.1px;top:329px;line-height:14px;font-size:11px;color:#0b2036;letter-spacing:1.05px;">08:00</span><span class="t" style="left:936.0px;top:329px;line-height:14px;font-size:11px;color:#0b2036;letter-spacing:1.05px;">09:00</span><span class="t" style="left:1034.0px;top:329px;line-height:14px;font-size:11px;color:#0b2036;letter-spacing:1.05px;">10:00</span><span class="t" style="left:1131.9px;top:329px;line-height:14px;font-size:11px;color:#0b2036;letter-spacing:1.21px;">11:00</span><span class="t" style="left:1229.8px;top:329px;line-height:14px;font-size:11px;color:#0b2036;letter-spacing:1.05px;">12:00</span><span class="t" style="left:1327.7px;top:329px;line-height:14px;font-size:11px;color:#0b2036;letter-spacing:1.05px;">13:00</span><span class="t" style="left:1425.6px;top:329px;line-height:14px;font-size:11px;color:#0b2036;letter-spacing:1.05px;">14:00</span>
<span class="t" style="left:58.0px;top:364px;line-height:15px;font-size:11.5px;color:#0e2a44;letter-spacing:0.42px;">Скорость</span><span class="t" style="left:237.8px;top:364px;line-height:15px;font-size:11.5px;color:#0e2a44;transform:scaleX(0.9843);transform-origin:0 50%;">ДУТ</span><span class="t" style="left:416.5px;top:364px;line-height:15px;font-size:11.5px;color:#0e2a44;letter-spacing:0.33px;">ДУТ(фильтр)</span></div>
<div class="a" style="left:1911px;top:532px;width:9px;height:400px;background:#13a8ec"></div><div class="a" style="left:1911px;top:532px;width:7px;height:400px;background:#1393d3"></div><div class="a" style="left:426px;top:932px;width:1494px;height:10px;background:#0e3055;overflow:hidden"><svg style="left:1413px;top:7px" width="12" height="20" viewBox="0 0 12 20"><path d="M6 2 V18 M2.4 5.6 L6 2 L9.6 5.6 M2.4 14.4 L6 18 L9.6 14.4" fill="none" stroke="#fff" stroke-width="1.4"/></svg><svg style="left:1429px;top:7px" width="20" height="20" viewBox="0 0 20 20"><g fill="none" stroke="#fff" stroke-width="1.3"><circle cx="10" cy="10" r="8"/><path d="M6.6 6.6 L13.4 13.4 M13.4 6.6 L6.6 13.4"/></g></svg></div>
<div id="tools"><div class="a" style="left:0;top:0;width:35px;height:35px;background:#1aaeee"></div><div class="a" style="left:0;top:71px;width:35px;height:1px;background:#1b4068"></div><div class="a" style="left:0;top:107px;width:35px;height:1px;background:#1b4068"></div><div class="a" style="left:0;top:143px;width:35px;height:1px;background:#1b4068"></div><div class="a" style="left:0;top:179px;width:35px;height:1px;background:#1b4068"></div><div class="a" style="left:0;top:215px;width:35px;height:1px;background:#1b4068"></div><div class="a" style="left:0;top:251px;width:35px;height:1px;background:#1b4068"></div><div class="a" style="left:0;top:287px;width:35px;height:1px;background:#1b4068"></div><div class="a" style="left:0;top:323px;width:35px;height:1px;background:#1b4068"></div><div class="a" style="left:0;top:359px;width:35px;height:1px;background:#1b4068"></div><div class="a" style="left:0;top:395px;width:35px;height:1px;background:#1b4068"></div><div class="a" style="left:0;top:431px;width:35px;height:1px;background:#1b4068"></div><svg style="left:0;top:0px" width="35" height="35" viewBox="0 0 35 35"><g fill="none" stroke="#8aa6c8" stroke-width="1.3" stroke-linecap="round" stroke-linejoin="round"><circle cx="15.2" cy="15.6" r="5.4" stroke="#a9e2fb" stroke-width="2.2"/><path d="M19.4 19.8 L24.8 25.2" stroke="#a9e2fb" stroke-width="3"/></g></svg><svg style="left:0;top:35px" width="35" height="36" viewBox="0 0 35 36"><g fill="none" stroke="#8aa6c8" stroke-width="1.3" stroke-linecap="round" stroke-linejoin="round"><path d="M9.6 14.7 H25.2 M9.6 20.5 H25.2 M9.6 26.1 H25.2" stroke-width="1.5" stroke-linecap="butt"/></g></svg><svg style="left:0;top:71px" width="35" height="36" viewBox="0 0 35 36"><g fill="none" stroke="#8aa6c8" stroke-width="1.3" stroke-linecap="round" stroke-linejoin="round"><path d="M18 13.1 H10.6 V26.9 H24.8 V19.6"/><path d="M25 12 L16.2 20.8 M16 16.2 V21 H20.8"/></g></svg><svg style="left:0;top:107px" width="35" height="36" viewBox="0 0 35 36"><g fill="none" stroke="#8aa6c8" stroke-width="1.3" stroke-linecap="round" stroke-linejoin="round"><path d="M12.6 14.2 A7.6 7.6 0 0 0 23.4 25 Z"/><path d="M18 19.6 L23.6 14"/><circle cx="24.3" cy="13.3" r="1" fill="#8aa6c8"/></g></svg><svg style="left:0;top:143px" width="35" height="36" viewBox="0 0 35 36"><g fill="none" stroke="#8aa6c8" stroke-width="1.3" stroke-linecap="round" stroke-linejoin="round"><circle cx="17.5" cy="19.5" r="7.6"/></g></svg><svg style="left:0;top:179px" width="35" height="36" viewBox="0 0 35 36"><g fill="none" stroke="#8aa6c8" stroke-width="1.3" stroke-linecap="round" stroke-linejoin="round"><path d="M12.2 14.2 H19.8 L23.8 18.2 V28.4 H12.2 Z M19.6 14.4 V18.4 H23.6"/></g></svg><svg style="left:0;top:215px" width="35" height="36" viewBox="0 0 35 36"><g fill="none" stroke="#8aa6c8" stroke-width="1.3" stroke-linecap="round" stroke-linejoin="round"><path d="M11.2 12 H24 Q25.8 12 25.8 13.6 V21.4 Q25.8 23 24 23 H23.6 L24 26.6 L20 23 H11.2 Q9.4 23 9.4 21.4 V13.6 Q9.4 12 11.2 12 Z"/><path d="M12.6 15.6 H22.6 M12.6 19 H22.6"/></g></svg><svg style="left:0;top:251px" width="35" height="36" viewBox="0 0 35 36"><g fill="none" stroke="#8aa6c8" stroke-width="1.3" stroke-linecap="round" stroke-linejoin="round"><path d="M14.6 16.8 L25 27.2" stroke-width="2.2"/><path d="M10.4 27.4 L21.6 16.2" stroke-width="2.2"/><path d="M21.4 16.4 L25.6 11.6" stroke-width="1.3"/><path d="M14.8 12.2 Q11.2 10.8 9.8 14.2 L12.6 14.6 L13.2 16.4 L11.4 18.2 Q14.4 19 15.6 16.2 Q16.2 14 14.8 12.2 Z" stroke-width="1.2"/></g></svg><svg style="left:0;top:323px" width="35" height="36" viewBox="0 0 35 36"><g fill="none" stroke="#8aa6c8" stroke-width="1.3" stroke-linecap="round" stroke-linejoin="round"><circle cx="17.9" cy="17.6" r="6.5"/><path d="M13 10.6 A9.4 9.4 0 0 0 23.6 26.2 M17.7 27.2 V29.6 M13.4 30.2 H22.4"/></g></svg><svg style="left:0;top:359px" width="35" height="36" viewBox="0 0 35 36"><g fill="none" stroke="#8aa6c8" stroke-width="1.3" stroke-linecap="round" stroke-linejoin="round"><path d="M17.5 11 Q10.8 19.4 10.8 23.2 A6.7 6.7 0 0 0 24.2 23.2 Q24.2 19.4 17.5 11 Z"/><path d="M13.4 23.6 Q13.4 21.4 14.8 19.4" stroke-width="1"/></g></svg><svg style="left:0;top:395px" width="35" height="36" viewBox="0 0 35 36"><g fill="none" stroke="#8aa6c8" stroke-width="1.3" stroke-linecap="round" stroke-linejoin="round"><path d="M15.2 14.5 H25.6 M15.2 19.5 H25.6 M15.2 24.5 H25.6" stroke-linecap="butt" stroke-width="1.4"/><circle cx="10.6" cy="14.5" r="1.3" fill="#8aa6c8" stroke="none"/><circle cx="10.6" cy="19.5" r="1.3" fill="#8aa6c8" stroke="none"/><circle cx="10.6" cy="24.5" r="1.3" fill="#8aa6c8" stroke="none"/></g></svg><span class="t" style="left:14.4px;top:155px;line-height:15px;font-size:11.5px;color:#8aa6c8;font-weight:bold;">?</span><span class="t" style="left:9.4px;top:298px;line-height:16px;font-size:12px;color:#8aa6c8;transform:scaleX(0.9341);transform-origin:0 50%;">RU</span></div>
<div id="foot"><span class="t" style="left:897.3px;top:1px;line-height:16px;font-size:12px;color:#fff;transform:scaleX(0.9451);transform-origin:0 50%;">Copyright © 2016 Gelios</span></div>
</body></html>
